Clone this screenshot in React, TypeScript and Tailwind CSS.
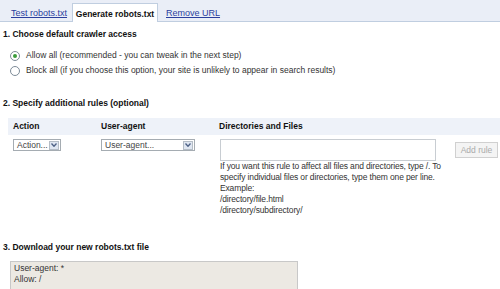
import React from 'react';

const Radio = ({ checked }: { checked?: boolean }) => (
  <span className="inline-flex h-[10px] w-[10px] items-center justify-center rounded-full border border-[#7d8b98] bg-white">
    {checked && <span className="h-[4px] w-[4px] rounded-full bg-[#3c9c3c]" />}
  </span>
);

const Select = ({ label, width }: { label: string; width: string }) => (
  <div className={`flex h-[12px] items-center justify-between border border-[#a5acb2] bg-white pl-[3px] ${width}`}>
    <span className="text-[8.5px] leading-none text-[#444]">{label}</span>
    <span className="mr-[1px] flex h-[9px] w-[10px] items-center justify-center border border-[#b5bdc6] bg-[#dfe6f1]">
      <svg width="6" height="4" viewBox="0 0 6 4">
        <path d="M0.5 0.5 L3 3.3 L5.5 0.5" fill="none" stroke="#4d6185" strokeWidth="1.3" />
      </svg>
    </span>
  </div>
);

const App = () => {
  return (
    <div
      className="h-[289px] w-[500px] overflow-hidden bg-white text-[8.5px] leading-[11px] text-[#333]"
      style={{ fontFamily: '"Liberation Sans", Arial, sans-serif' }}
    >
      <div className="flex h-[22px] items-end border-b border-[#c0cee0] bg-[#eaeef7] pl-[6px] text-[9px]">
        <div className="flex h-[18px] w-[66px] items-center pl-[5px] pt-[2px] text-[#2b3f9e] underline">Test robots.txt</div>
        <div className="-mb-[1px] flex h-[19px] w-[86px] items-center justify-center border border-b-0 border-[#c0cee0] bg-white pt-[2px] text-[8.5px] font-bold text-[#111]">
          Generate robots.txt
        </div>
        <div className="flex h-[18px] items-center pl-[8px] pt-[2px] text-[#2b3f9e] underline">Remove URL</div>
      </div>

      <div className="mt-[7px] h-[11px] pl-[3px] font-bold text-[#111]">1. Choose default crawler access</div>
      <div className="mt-[10px] flex h-[11px] items-center gap-[6px] pl-[10px]">
        <Radio checked />
        <span>Allow all (recommended - you can tweak in the next step)</span>
      </div>
      <div className="mt-[4px] flex h-[11px] items-center gap-[6px] pl-[10px]">
        <Radio />
        <span>Block all (if you choose this option, your site is unlikely to appear in search results)</span>
      </div>

      <div className="mt-[22px] h-[11px] pl-[3px] font-bold text-[#111]">2. Specify additional rules (optional)</div>
      <div className="mt-[9px] ml-[8px] flex h-[17px] items-center bg-[#eef2f9] font-bold text-[#111]">
        <span className="w-[88px] pl-[5px]">Action</span>
        <span className="w-[118px] pl-[5px]">User-agent</span>
        <span className="pl-[5px]">Directories and Files</span>
      </div>
      <div className="ml-[13px] mt-[4px] flex items-start">
        <div className="w-[88px]">
          <Select label="Action..." width="w-[48px]" />
        </div>
        <div className="w-[119px]">
          <Select label="User-agent..." width="w-[94px]" />
        </div>
        <div className="w-[235px]">
          <div className="h-[22px] w-[216px] border border-[#c8cdd2] bg-white" />
          <div className="whitespace-nowrap tracking-[-0.15px]">
            If you want this rule to affect all files and directories, type /. To
            <br />
            specify individual files or directories, type them one per line.
            <br />
            Example:
            <br />
            /directory/file.html
            <br />
            /directory/subdirectory/
          </div>
        </div>
        <div className="mt-[3px] flex h-[16px] w-[43px] items-center justify-center border border-[#d0d0d0] bg-[#f4f4f4] text-[#aaa]">
          Add rule
        </div>
      </div>

      <div className="mt-[26px] h-[11px] pl-[3px] font-bold text-[#111]">3. Download your new robots.txt file</div>
      <div className="ml-[10px] mt-[8px] h-[40px] w-[288px] border border-[#c8c8c8] bg-[#ece9e3] px-[3px] pt-[1px]">
        User-agent: *
        <br />
        Allow: /
      </div>
    </div>
  );
};

export default App;
